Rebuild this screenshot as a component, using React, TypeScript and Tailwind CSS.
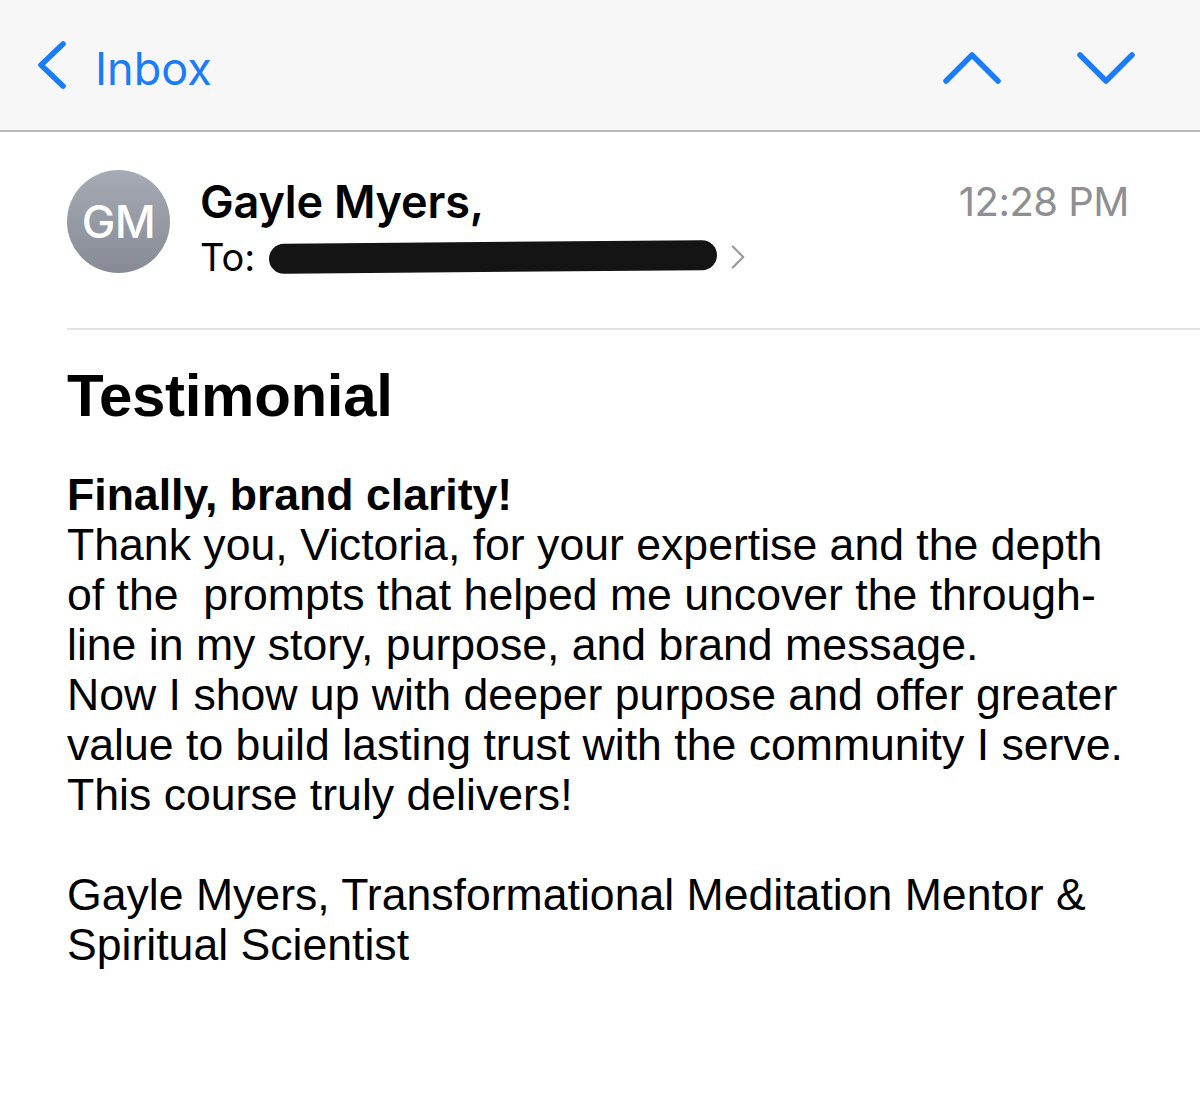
import React from "react";

const body = { fontFamily: '"Liberation Sans", Arial, sans-serif' };
const ui = { fontFamily: 'Inter, Roboto, "Liberation Sans", sans-serif' };

function Chevron({ dir, className }: { dir: "left" | "up" | "down" | "right"; className?: string }) {
  const d =
    dir === "left"
      ? "M28 4 L6 25 L28 46"
      : dir === "up"
      ? "M4 31 L30 5 L56 31"
      : dir === "down"
      ? "M4 5 L30 31 L56 5"
      : "M4 4 L16 16 L4 28";
  return (
    <svg className={className} viewBox={dir === "left" ? "0 0 34 50" : dir === "right" ? "0 0 20 32" : "0 0 60 36"} fill="none" stroke="currentColor" strokeLinecap="round" strokeLinejoin="round" strokeWidth={dir === "right" ? 2.5 : 5.5}>
      <path d={d} />
    </svg>
  );
}

export default function App() {
  return (
    <div className="w-[1200px] h-[1107px] bg-white overflow-hidden" style={ui}>
      <header className="h-[132px] bg-[#f7f7f8] border-b-[2px] border-[#b8b8bc] flex items-center justify-between pl-[35px] pr-[64px]">
        <div className="flex items-center gap-[26px] text-[#1a7cf6]">
          <Chevron dir="left" className="w-[34px] h-[50px]" />
          <span className="text-[45px] leading-none pt-[6px]">Inbox</span>
        </div>
        <div className="flex items-center gap-[74px] text-[#1a7cf6] pt-[6px]">
          <Chevron dir="up" className="w-[60px] h-[36px]" />
          <Chevron dir="down" className="w-[60px] h-[36px]" />
        </div>
      </header>

      <section className="pl-[67px]">
        <div className="flex items-start pt-[38px] pb-[52px] border-b-[2px] border-[#e3e3e6] pr-[71px]">
          <div className="w-[103px] h-[103px] rounded-full bg-gradient-to-b from-[#a7abb6] to-[#868a95] flex items-center justify-center text-white text-[45px] font-medium tracking-[-0.5px]">
            GM
          </div>
          <div className="ml-[30px] flex-1">
            <div className="text-[45px] font-semibold leading-none pt-[9px] text-black tracking-[-0.2px]">Gayle Myers,</div>
            <div className="flex items-center mt-[14px] text-[38px] leading-none text-black">
              <span>To:</span>
              <span className="ml-[14px] w-[448px] h-[30px] rounded-full bg-[#141414] -rotate-[0.5deg]" />
              <Chevron dir="right" className="ml-[12px] w-[18px] h-[28px] text-[#9a9a9e]" />
            </div>
          </div>
          <div className="pt-[12px] text-[40px] text-[#8e8e93] leading-none tracking-[-0.5px]">12:28 PM</div>
        </div>

        <div className="pr-[40px] text-black" style={body}>
          <h1 className="text-[60px] font-bold leading-none mt-[36px] tracking-[-0.3px]">Testimonial</h1>
          <div className="mt-[44px] text-[44.6px] leading-[50px]">
            <div className="font-bold">Finally, brand clarity!</div>
            <div>Thank you, Victoria, for your expertise and the depth</div>
            <div>of the&nbsp; prompts that helped me uncover the through-</div>
            <div>line in my story, purpose, and brand message.</div>
            <div>Now I show up with deeper purpose and offer greater</div>
            <div>value to build lasting trust with the community I serve.</div>
            <div>This course truly delivers!</div>
            <div className="h-[50px]" />
            <div>Gayle Myers, Transformational Meditation Mentor &amp;</div>
            <div>Spiritual Scientist</div>
          </div>
        </div>
      </section>
    </div>
  );
}
